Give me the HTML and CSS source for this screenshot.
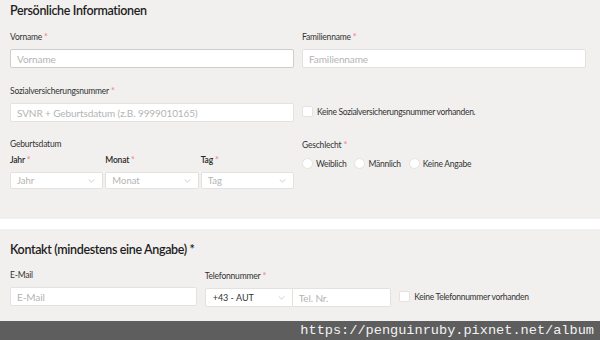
FILE: index.html
```html
<!DOCTYPE html>
<html lang="de">
<head>
    <meta charset="UTF-8">
    <title>Persönliche Informationen</title>
    <link rel="stylesheet" href="styles.css">
</head>
<body>
    <section class="panel personal">
        <h2 class="panel-title">Persönliche Informationen</h2>

        <div class="row two">
            <div class="field">
                <label>Vorname<span class="req">*</span></label>
                <input class="input active" type="text" placeholder="Vorname">
            </div>
            <div class="field">
                <label>Familienname<span class="req">*</span></label>
                <input class="input" type="text" placeholder="Familienname">
            </div>
        </div>

        <div class="row two">
            <div class="field">
                <label>Sozialversicherungsnummer<span class="req">*</span></label>
                <input class="input" type="text" placeholder="SVNR + Geburtsdatum (z.B. 9999010165)">
            </div>
            <div class="field check-field">
                <div class="check"><span class="box"></span>Keine Sozialversicherungsnummer vorhanden.</div>
            </div>
        </div>

        <div class="row two">
            <div class="field">
                <label class="group-label">Geburtsdatum</label>
                <div class="date-row">
                    <div class="sub">
                        <label class="strong">Jahr<span class="req">*</span></label>
                        <div class="select"><span>Jahr</span><svg viewBox="0 0 8 5" width="7" height="4"><path d="M0.5 0.5 L4 4 L7.5 0.5" fill="none" stroke="#b9b9b9" stroke-width="0.9"/></svg></div>
                    </div>
                    <div class="sub">
                        <label class="strong">Monat<span class="req">*</span></label>
                        <div class="select"><span>Monat</span><svg viewBox="0 0 8 5" width="7" height="4"><path d="M0.5 0.5 L4 4 L7.5 0.5" fill="none" stroke="#b9b9b9" stroke-width="0.9"/></svg></div>
                    </div>
                    <div class="sub">
                        <label class="strong">Tag<span class="req">*</span></label>
                        <div class="select"><span>Tag</span><svg viewBox="0 0 8 5" width="7" height="4"><path d="M0.5 0.5 L4 4 L7.5 0.5" fill="none" stroke="#b9b9b9" stroke-width="0.9"/></svg></div>
                    </div>
                </div>
            </div>
            <div class="field">
                <label class="group-label">Geschlecht<span class="req">*</span></label>
                <div class="radios">
                    <div class="radio"><span class="dot"></span>Weiblich</div>
                    <div class="radio"><span class="dot"></span>Männlich</div>
                    <div class="radio"><span class="dot"></span>Keine Angabe</div>
                </div>
            </div>
        </div>
    </section>

    <div class="band"></div>

    <section class="panel contact">
        <h2 class="panel-title">Kontakt (mindestens eine Angabe) *</h2>
        <div class="row three">
            <div class="field">
                <label>E-Mail</label>
                <input class="input" type="text" placeholder="E-Mail">
            </div>
            <div class="field">
                <label>Telefonnummer<span class="req">*</span></label>
                <div class="phone">
                    <div class="select code"><span class="value">+43 - AUT</span><svg viewBox="0 0 8 5" width="7" height="4"><path d="M0.5 0.5 L4 4 L7.5 0.5" fill="none" stroke="#b9b9b9" stroke-width="0.9"/></svg></div>
                    <input class="input tel" type="text" placeholder="Tel. Nr.">
                </div>
            </div>
            <div class="field check-field">
                <div class="check"><span class="box"></span>Keine Telefonnummer vorhanden</div>
            </div>
        </div>
    </section>

    <div class="watermark">https://penguinruby.pixnet.net/album</div>
</body>
</html>
```

FILE: styles.css
```css
body {
    margin: 0;
    background-color: #fff;
    font-family: Lato, 'Open Sans', sans-serif;
    color: #333;
}
.panel {
    background-color: #f1f0ee;
    padding: 3px 14px 0 10px;
    box-sizing: border-box;
}
.personal {
    height: 219px;
}
.band {
    height: 10px;
}
.contact {
    height: 92px;
    padding-top: 13px;
}
.panel-title {
    margin: 0 0 12px;
    font-size: 12.5px;
    line-height: 16px;
    font-weight: 600;
    letter-spacing: -0.35px;
    color: #1d1d1d;
}
.row {
    display: grid;
    gap: 8px;
    margin-bottom: 17px;
}
.row.two {
    grid-template-columns: 1fr 1fr;
}
.row.three {
    grid-template-columns: 1fr 1fr 1fr;
}
.field {
    display: flex;
    flex-direction: column;
}
label {
    display: block;
    font-size: 8.5px;
    line-height: 11px;
    letter-spacing: -0.2px;
    margin-bottom: 6px;
    color: #333;
}
label.group-label {
    margin-bottom: 4px;
}
label.strong {
    font-weight: 600;
    color: #2a2a2a;
    margin-bottom: 6px;
}
.req {
    color: #f29198;
    margin-left: 2px;
    font-size: 9px;
    font-weight: 700;
}
.input {
    box-sizing: border-box;
    height: 19px;
    width: 100%;
    margin: 0;
    padding: 0 6px;
    border: 1px solid #e3e2e0;
    border-radius: 2px;
    background-color: #fff;
    font-family: Lato, 'Open Sans', sans-serif;
    font-size: 10px;
    letter-spacing: -0.1px;
    color: #333;
    outline: none;
}
.input.active {
    border-color: #cfcecc;
}
.input::placeholder {
    color: #b4b4b4;
}
.check-field {
    padding-top: 17px;
}
.check {
    display: flex;
    align-items: center;
    gap: 4px;
    height: 19px;
    font-size: 8.5px;
    letter-spacing: -0.3px;
    color: #333;
}
.box {
    width: 9px;
    height: 9px;
    background-color: #fff;
    border: 1px solid #e4e3e1;
    border-radius: 2px;
}
.date-row {
    display: grid;
    grid-template-columns: 1fr 1fr 1fr;
    gap: 2px;
}
.select {
    box-sizing: border-box;
    height: 17px;
    display: flex;
    align-items: center;
    justify-content: space-between;
    padding: 0 7px 0 6px;
    background-color: #fff;
    border: 1px solid #e3e2e0;
    border-radius: 2px;
    font-size: 9.5px;
    color: #b4b4b4;
}
.radios {
    display: flex;
    gap: 8px;
    margin-top: 3px;
}
.radio {
    display: flex;
    align-items: center;
    gap: 3px;
    font-size: 8.5px;
    letter-spacing: -0.25px;
    color: #333;
}
.dot {
    width: 9px;
    height: 9px;
    border-radius: 50%;
    background-color: #fff;
    border: 1px solid #e4e3e1;
}
.phone {
    display: flex;
}
.select.code {
    height: 19px;
    flex: 0 0 88px;
    border-radius: 2px 0 0 2px;
    padding-left: 7px;
}
.select.code .value {
    color: #333;
    font-size: 9px;
}
.input.tel {
    border-left: none;
    border-radius: 0 2px 2px 0;
}
.watermark {
    height: 19px;
    line-height: 19px;
    background-color: #5e5e5e;
    color: #f2f2f2;
    font-family: 'Liberation Mono', monospace;
    font-size: 13.6px;
    text-align: right;
    padding-right: 6px;
}
```
